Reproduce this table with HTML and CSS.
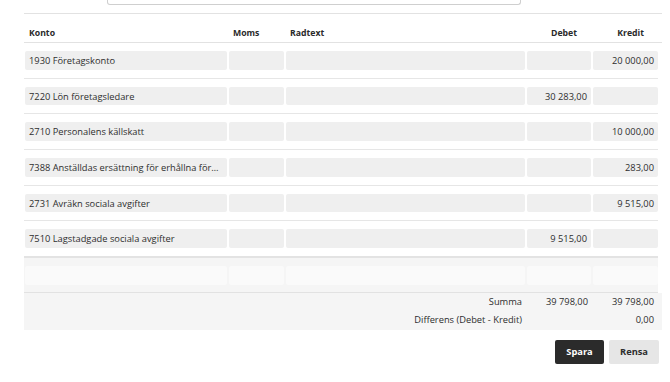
FILE: index.html
```html
<!DOCTYPE html>
<html lang="sv">
<head>
<meta charset="utf-8">
<title>Verifikation</title>
<link rel="stylesheet" href="styles.css">
</head>
<body>
<div class="page">
  <div class="search-row"><div class="search-box"></div></div>
  <div class="rule"></div>
  <div class="thead">
    <div class="th">Konto</div>
    <div class="th">Moms</div>
    <div class="th">Radtext</div>
    <div class="th num">Debet</div>
    <div class="th num">Kredit</div>
  </div>
  <div class="rows">
    <div class="row">
      <div class="cell">1930 Företagskonto</div><div class="cell"></div><div class="cell"></div>
      <div class="cell num"></div><div class="cell num">20 000,00</div>
    </div>
    <div class="row">
      <div class="cell">7220 Lön företagsledare</div><div class="cell"></div><div class="cell"></div>
      <div class="cell num">30 283,00</div><div class="cell num"></div>
    </div>
    <div class="row">
      <div class="cell">2710 Personalens källskatt</div><div class="cell"></div><div class="cell"></div>
      <div class="cell num"></div><div class="cell num">10 000,00</div>
    </div>
    <div class="row">
      <div class="cell" title="7388 Anställdas ersättning för erhållna förmåner">7388 Anställdas ersättning för erhållna för…</div><div class="cell"></div><div class="cell"></div>
      <div class="cell num"></div><div class="cell num">283,00</div>
    </div>
    <div class="row">
      <div class="cell">2731 Avräkn sociala avgifter</div><div class="cell"></div><div class="cell"></div>
      <div class="cell num"></div><div class="cell num">9 515,00</div>
    </div>
    <div class="row last">
      <div class="cell">7510 Lagstadgade sociala avgifter</div><div class="cell"></div><div class="cell"></div>
      <div class="cell num">9 515,00</div><div class="cell num"></div>
    </div>
    <div class="row new">
      <div class="cell"></div><div class="cell"></div><div class="cell"></div>
      <div class="cell"></div><div class="cell"></div>
    </div>
  </div>
  <div class="summary">
    <div class="sum-row">
      <div class="sum-label">Summa</div>
      <div class="sum-val">39 798,00</div>
      <div class="sum-val">39 798,00</div>
    </div>
    <div class="sum-row">
      <div class="sum-label">Differens (Debet - Kredit)</div>
      <div class="sum-val"></div>
      <div class="sum-val">0,00</div>
    </div>
  </div>
  <div class="actions">
    <button class="btn btn-dark">Spara</button>
    <button class="btn btn-light">Rensa</button>
  </div>
</div>
</body>
</html>
```

FILE: styles.css
```css
* { box-sizing: border-box; }
html, body { margin: 0; padding: 0; background: #fff; }
body {
  font-family: "Open Sans", "Liberation Sans", sans-serif;
  font-size: 9.3px;
  color: #2e2e2e;
}
.page {
  margin-left: 24px;
  width: 638px;
}
.search-row {
  padding-left: 83px;
}
.search-box {
  width: 414px;
  height: 5px;
  border: 1px solid #cfcfcf;
  border-top: none;
  border-radius: 0 0 3px 3px;
}
.rule {
  margin-top: 8px;
  height: 1px;
  background: #e2e2e2;
}
.thead, .row, .sum-row {
  display: grid;
  grid-template-columns: 202px 55px 239px 64px 65px;
  column-gap: 2px;
  padding-left: 1px;
}
.thead {
  border-bottom: 1px solid #e2e2e2;
  padding-top: 12px;
  padding-bottom: 2px;
}
.th {
  font-weight: 700;
  font-size: 8.7px;
  line-height: 14px;
  padding-left: 4px;
  color: #2a2a2a;
}
.th.num { text-align: right; padding-right: 14px; }
.rows { margin-right: 4px; }
.row {
  padding-top: 8px;
  padding-bottom: 8px;
  border-bottom: 1px solid #e6e6e6;
}
.row.last { border-bottom: 2px solid #e3e3e3; }
.row.new {
  background: #f5f5f5;
  border-bottom: 1px solid #e2e2e2;
  padding-bottom: 7px;
}
.cell {
  height: 18.67px;
  line-height: 19.5px;
  background: #efefef;
  border-radius: 2px;
  padding: 0 4px;
  white-space: nowrap;
  overflow: hidden;
}
.row.new .cell { background: #fafafa; }
.cell.num { text-align: right; }
.summary {
  background: #f5f5f5;
}
.sum-row .sum-label {
  grid-column: 3;
  text-align: right;
  padding-right: 3px;
  line-height: 18.5px;
}
.sum-val {
  text-align: right;
  padding-right: 3px;
  line-height: 18.5px;
}
.sum-val:last-child { padding-right: 4px; }
.actions {
  display: flex;
  justify-content: flex-end;
  gap: 5px;
  margin-top: 10px;
  padding-right: 3px;
}
.btn {
  font-family: "Open Sans", "Liberation Sans", sans-serif;
  font-weight: 700;
  font-size: 9.3px;
  height: 24px;
  border: none;
  border-radius: 2px;
  padding: 0;
  cursor: pointer;
}
.btn-dark { width: 49px; background: #2b2b2b; color: #fff; }
.btn-light { width: 50px; background: #e6e6e6; color: #2e2e2e; }
```
